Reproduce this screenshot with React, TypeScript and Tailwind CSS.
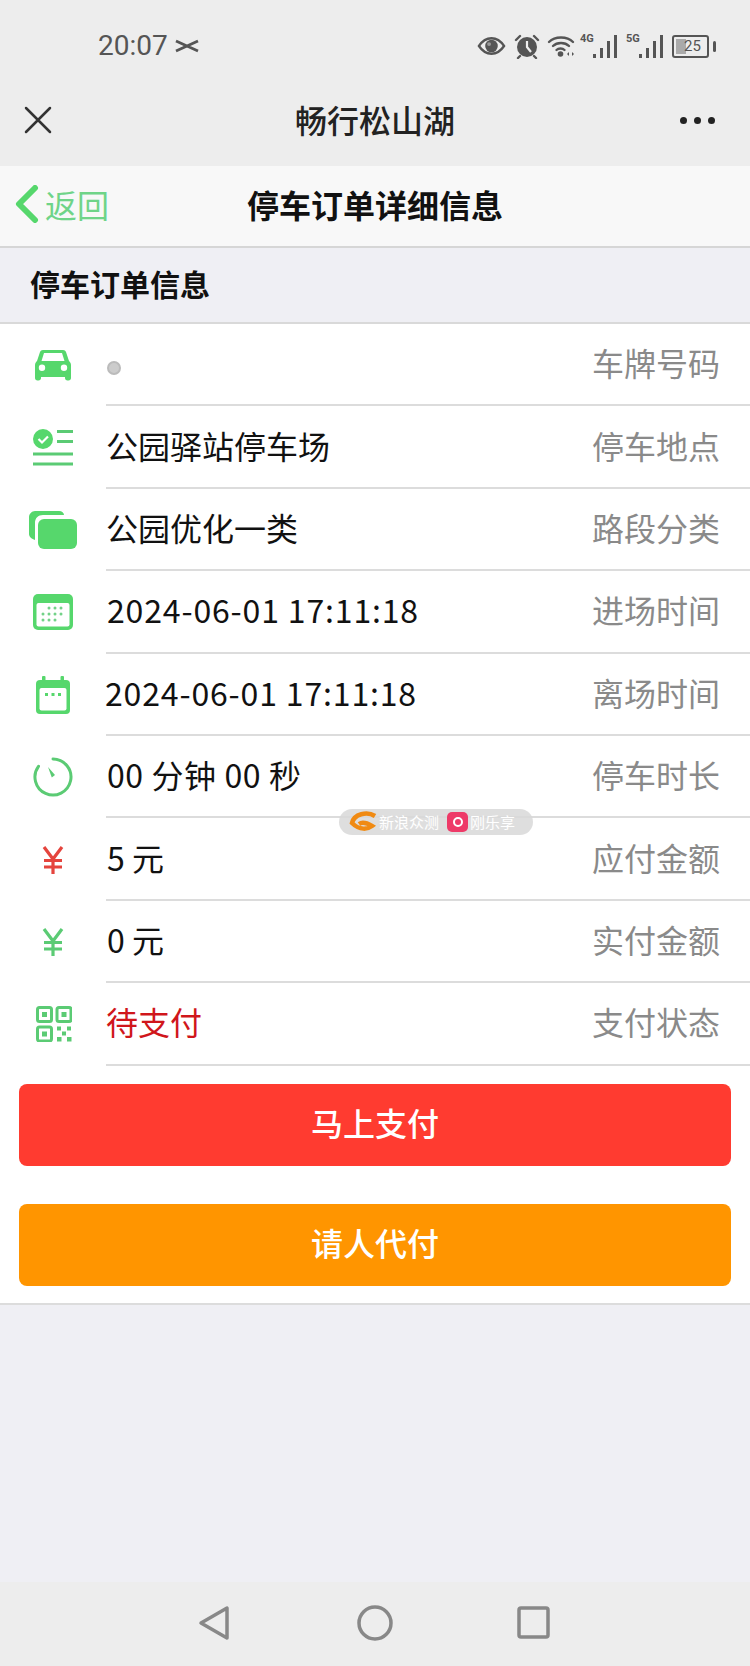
const cjk = { fontFamily: '"Noto Sans CJK SC", "Noto Sans", sans-serif' };
const green = "#56d76c";
const dimGreen = "#5bcb74";

function StatusIcons() {
  return (
    <div className="flex items-center text-[#555]">
      <svg width="29" height="22" viewBox="0 0 30 22">
        <path d="M2 11C6 5 10 3 15 3s9 2 13 8c-4 6-8 8-13 8s-9-2-13-8z" fill="none" stroke="#555" strokeWidth="2.400" />
        <circle cx="15" cy="11" r="6.500" fill="#555" />
        <circle cx="12.500" cy="9" r="2" fill="#999" />
      </svg>
      <svg width="26" height="26" viewBox="0 0 26 26" className="ml-[8px]">
        <circle cx="13" cy="14" r="10" fill="#555" />
        <path d="M13 8v6l4 5" fill="none" stroke="#eee" strokeWidth="2.200" />
        <path d="M2 7l4-4M24 7l-4-4M6 23l-2 2M20 23l2 2" stroke="#555" strokeWidth="2.400" strokeLinecap="round" />
      </svg>
      <svg width="28" height="24" viewBox="0 0 28 24" className="ml-[7px]">
        <g fill="none" stroke="#555" strokeWidth="2.400" strokeLinecap="round">
          <path d="M2 8c6-6 18-6 24 0" />
          <path d="M6 12c4-4 12-4 16 0" />
          <path d="M9.500 16c2-2 6-2 8 0" />
        </g>
        <circle cx="13.500" cy="20" r="2.800" fill="#555" />
        <path d="M20 20l2-2v4zM27 20l-2-2v4z" fill="#555" />
      </svg>
      <Signal label="4G" className="ml-[5px]" />
      <Signal label="5G" className="ml-[9px]" />
      <div className="relative ml-[9px] flex h-[23px] w-[37px] items-center justify-center rounded-[3px] border-2 border-[#555] text-[15px] leading-none" style={{ fontFamily: "Roboto, sans-serif" }}>
        <div className="absolute left-[2px] top-[2px] h-[15px] w-[10px] bg-[#aaa]" />
        <span className="relative ml-[4px]">25</span>
      </div>
      <div className="ml-[4px] h-[11px] w-[3px] rounded-sm bg-[#555]" />
    </div>
  );
}

function Signal({ label, className }: { label: string; className?: string }) {
  return (
    <div className={`relative h-[24px] w-[37px] ${className}`}>
      <span className="absolute left-0 top-0 text-[11px] font-bold leading-[10px]" style={{ fontFamily: "Roboto, sans-serif" }}>{label}</span>
      <svg width="24" height="23" viewBox="0 0 24 23" className="absolute bottom-0 right-0">
        <g fill="#555">
          <rect x="0" y="19" width="3" height="4" />
          <rect x="7" y="13" width="3" height="10" />
          <rect x="14" y="6" width="3" height="17" />
          <rect x="21" y="0" width="3" height="23" />
        </g>
      </svg>
    </div>
  );
}

const icons = {
  car: (
    <svg width="36" height="32" viewBox="0 0 36 32" fill={green}>
      <path fillRule="evenodd" d="M8 1h20c1.500 0 2.500.8 3 2l3 9c1 1 2 2 2 4v13c0 1.500-1 2.500-2.500 2.500h-1c-1.500 0-2.500-1-2.500-2.500v-1H6v1c0 1.500-1 2.500-2.500 2.500h-1C1 31.500 0 30.500 0 29V16c0-2 1-3 2-4l3-9c.5-1.200 1.500-2 3-2zm1 3l-2.500 8h23L27 4zM7 15.500a3.200 3.200 0 1 0 0 6.400 3.200 3.200 0 0 0 0-6.400zm22 0a3.200 3.200 0 1 0 0 6.400 3.200 3.200 0 0 0 0-6.400z" />
    </svg>
  ),
  list: (
    <svg width="40" height="38" viewBox="0 0 40 38">
      <circle cx="10" cy="10" r="10" fill={green} />
      <path d="M5.500 10l3.500 3.500 6-6" fill="none" stroke="#fff" strokeWidth="2.200" />
      <path d="M24 2.500h16M24 12.500h16M0 25h40M0 35h40" stroke={dimGreen} strokeWidth="3" />
    </svg>
  ),
  cards: (
    <svg width="48" height="38" viewBox="0 0 48 38" fill={green}>
      <path d="M6 0h24c3 0 5 2 5 4H14C9 4 6 7 6 12v17c-3-1-6-3-6-6V6c0-3 3-6 6-6z" />
      <rect x="9" y="8" width="39" height="30" rx="6" />
    </svg>
  ),
  grid: (
    <svg width="40" height="36" viewBox="0 0 40 36">
      <rect width="40" height="36" rx="5" fill={green} />
      <rect x="3.500" y="9" width="33" height="23.500" rx="2" fill="#fff" />
      <g fill={dimGreen} opacity="0.85">
        {[[16, 14], [22, 14], [28, 14], [10, 20], [16, 20], [22, 20], [28, 20], [10, 26], [16, 26], [22, 26]].map(([x, y]) => (
          <circle key={`${x}-${y}`} cx={x} cy={y} r="1.500" />
        ))}
      </g>
    </svg>
  ),
  calendar: (
    <svg width="34" height="38" viewBox="0 0 34 38">
      <rect y="4" width="34" height="34" rx="4" fill={green} />
      <rect x="6" y="0" width="3.500" height="6" rx="1" fill={green} />
      <rect x="24.500" y="0" width="3.500" height="6" rx="1" fill={green} />
      <rect x="3.500" y="12" width="27" height="22.500" rx="2" fill="#fff" />
      <g fill={green}>
        <rect x="9" y="17" width="3" height="3" />
        <rect x="15.500" y="17" width="3" height="3" />
        <rect x="22" y="17" width="3" height="3" />
      </g>
    </svg>
  ),
  timer: (
    <svg width="40" height="40" viewBox="0 0 40 40">
      <path d="M20 2a18 18 0 1 1-14.500 7.300" fill="none" stroke={dimGreen} strokeWidth="3" strokeLinecap="round" />
      <path d="M15 10l7 8-3.200 2.500z" fill={dimGreen} />
    </svg>
  ),
  yenRed: <Yen color="#e5443d" />,
  yenGreen: <Yen color={dimGreen} />,
  qr: (
    <svg width="36" height="36" viewBox="0 0 36 36" fill="none" stroke={dimGreen} strokeWidth="3" className="ml-[2px]">
      <rect x="1.500" y="1.500" width="14" height="14" rx="2" />
      <rect x="21" y="1.500" width="14" height="14" rx="2" />
      <rect x="1.500" y="21" width="14" height="14" rx="2" />
      <g fill={dimGreen} stroke="none">
        <rect x="6" y="6" width="5" height="5" />
        <rect x="25.500" y="6" width="5" height="5" />
        <rect x="6" y="25.500" width="5" height="5" />
        <rect x="21" y="20.500" width="4" height="4" />
        <rect x="31" y="20.500" width="4" height="4" />
        <rect x="26" y="25.500" width="4" height="4" />
        <rect x="21" y="31" width="4.500" height="4.500" />
        <rect x="31" y="31" width="4.500" height="4.500" />
      </g>
    </svg>
  ),
};

function Yen({ color }: { color: string }) {
  return (
    <svg width="22" height="28" viewBox="0 0 22 28" fill="none" stroke={color} strokeWidth="3.200">
      <path d="M2 1l9 12 9-12M11 13v15M2 14.500h18M2 21h18" />
    </svg>
  );
}

const rows: { icon: keyof typeof icons; value: React.ReactNode; label: string; valueClass?: string }[] = [
  { icon: "car", value: <span className="mt-[12px] ml-[1px] block h-[14px] w-[14px] rounded-full border-2 border-[#bbb] bg-[#ccc]" />, label: "车牌号码" },
  { icon: "list", value: "公园驿站停车场", label: "停车地点" },
  { icon: "cards", value: "公园优化一类", label: "路段分类" },
  { icon: "grid", value: "2024-06-01 17:11:18", label: "进场时间", valueClass: "ml-[1px] tracking-[0.85px]" },
  { icon: "calendar", value: "2024-06-01 17:11:18", label: "离场时间", valueClass: "-ml-[1px] tracking-[0.85px]" },
  { icon: "timer", value: "00 分钟 00 秒", label: "停车时长", valueClass: "ml-[1px] tracking-[0.6px]" },
  { icon: "yenRed", value: "5 元", label: "应付金额", valueClass: "ml-[1px]" },
  { icon: "yenGreen", value: "0 元", label: "实付金额", valueClass: "ml-[1px]" },
  { icon: "qr", value: "待支付", label: "支付状态", valueClass: "text-[#d0161b]" },
];

function Row({ icon, value, label, valueClass }: (typeof rows)[number]) {
  return (
    <div className="flex h-[82.4px] items-stretch">
      <div className="flex w-[106px] shrink-0 items-center justify-center pr-[1px]">{icons[icon]}</div>
      <div className="flex flex-1 items-center justify-between border-b-2 border-[#dcdcdc] pb-[4px] pr-[30px]">
        <div className={`text-[32px] text-[#111] ${valueClass ?? ""}`}>{value}</div>
        <div className="text-[32px] text-[#8a8a8a]">{label}</div>
      </div>
    </div>
  );
}

export default function App() {
  return (
    <div className="relative flex h-[1666px] w-[750px] flex-col overflow-hidden bg-[#efeff4]" style={cjk}>
      <div className="bg-[#ededed]">
        <div className="flex h-[80px] items-center justify-between pl-[98px] pr-[34px] pt-[12px]">
          <div className="flex items-center gap-[7px] text-[28px] text-[#555]" style={{ fontFamily: "Roboto, sans-serif" }}>
            20:07
            <svg width="24" height="14" viewBox="0 0 24 14" fill="none" stroke="#555" strokeWidth="2.800"><path d="M1 2l11 5 11-5M1 12l11-5 11 5" /></svg>
          </div>
          <StatusIcons />
        </div>
        <div className="relative flex h-[86px] items-center justify-center pb-[8px]">
          <svg width="28" height="28" viewBox="0 0 28 28" className="absolute left-[24px] top-[26px]" stroke="#333" strokeWidth="2.500" strokeLinecap="round"><path d="M2 2l24 24M26 2L2 26" /></svg>
          <div className="text-[32px] font-medium text-[#222]">畅行松山湖</div>
          <div className="absolute right-[35px] top-[37px] flex gap-[7px]">
            <span className="h-[7px] w-[7px] rounded-full bg-[#222]" />
            <span className="h-[7px] w-[7px] rounded-full bg-[#222]" />
            <span className="h-[7px] w-[7px] rounded-full bg-[#222]" />
          </div>
        </div>
      </div>

      <div className="relative flex h-[82px] items-center justify-center border-b-2 border-[#d6d6d6] bg-[#f8f8f8] pb-[4px]">
        <div className="absolute left-[15px] flex items-center">
          <svg width="24" height="38" viewBox="0 0 24 38" fill="none" stroke={green} strokeWidth="6" strokeLinecap="round" strokeLinejoin="round"><path d="M20 3L4 19l16 16" /></svg>
          <span className="ml-[6px] text-[32px] text-[#6fd488]">返回</span>
        </div>
        <div className="text-[32px] font-bold text-[#111]">停车订单详细信息</div>
      </div>

      <div className="flex h-[76px] items-center border-b-2 border-[#d9d9d9] pb-[3px] pl-[30px] text-[30px] font-bold text-[#111]">停车订单信息</div>

      <div className="border-b-2 border-[#dcdcdc] bg-white pb-[17px]">
        {rows.map((r) => (
          <Row key={r.label} {...r} />
        ))}
        <button className="mx-[19px] mt-[18px] block h-[82px] w-[712px] rounded-[8px] bg-[#ff3b30] pb-[5px] text-[32px] font-medium text-white">马上支付</button>
        <button className="mx-[19px] mt-[38px] block h-[82px] w-[712px] rounded-[8px] bg-[#ff9500] pb-[5px] text-[32px] font-medium text-white">请人代付</button>
      </div>

      <div className="flex-1" />

      <div className="flex h-[84px] items-center bg-[#ededed]">
        <svg width="750" height="40" viewBox="0 0 750 40" fill="none" stroke="#888" strokeWidth="3.500" strokeLinejoin="round">
          <path d="M227 4v30L201 19z" />
          <circle cx="375" cy="19" r="16" />
          <rect x="519" y="4" width="29" height="29" rx="2" />
        </svg>
      </div>

      {/* watermark: the source is too blurred to read, so its wording is approximate */}
      <div className="absolute left-[339px] top-[809px] flex h-[26px] w-[194px] items-center rounded-full bg-[#d8d8d8]/85 pl-[10px] text-[15px] text-white">
        <svg width="28" height="22" viewBox="0 0 28 22" fill="none" stroke="#f08a12" strokeWidth="4.500"><path d="M26 5C18 0 5 3 3 12c8 8 16 6 20 3-5-3-10-4-13-2" /></svg>
        <span className="ml-[2px] w-[66px] whitespace-nowrap">新浪众测</span>
        <div className="ml-[2px] flex h-[20px] w-[21px] items-center justify-center rounded-[5px] bg-[#ee3a68]">
          <span className="h-[10px] w-[10px] rounded-full border-2 border-white" />
        </div>
        <span className="ml-[2px] whitespace-nowrap">刚乐享</span>
      </div>
    </div>
  );
}
